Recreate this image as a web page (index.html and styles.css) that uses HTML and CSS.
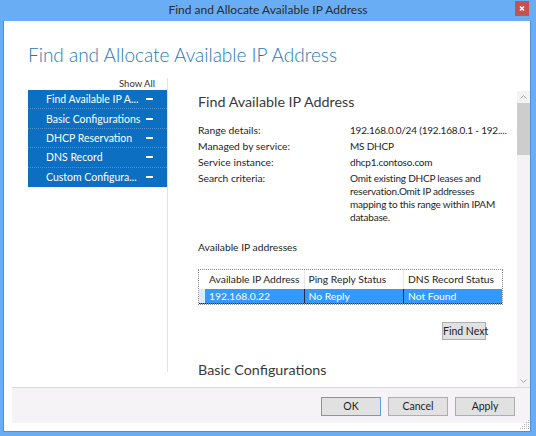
FILE: index.html
```html
<!DOCTYPE html>
<html>
<head>
<meta charset="utf-8">
<link rel="stylesheet" href="styles.css">
</head>
<body>
<div class="window">
  <div class="titlebar">
    <div></div>
    <div class="title">Find and Allocate Available IP Address</div>
    <div class="close"><svg width="14" height="15" viewBox="0 0 14 15"><path d="M5 5.5 L9 9.5 M9 5.5 L5 9.5" stroke="#fff" stroke-width="1.6"/></svg></div>
  </div>
  <div class="client">
    <div class="header"><h1>Find and Allocate Available IP Address</h1></div>
    <div class="main">
      <div class="navcol">
        <div class="showall">Show All</div>
        <ul class="nav">
          <li class="nav-item"><span class="nav-label">Find Available IP A...</span><span class="nav-minus"></span></li>
          <li class="nav-item"><span class="nav-label">Basic Configurations</span><span class="nav-minus"></span></li>
          <li class="nav-item"><span class="nav-label">DHCP Reservation</span><span class="nav-minus"></span></li>
          <li class="nav-item"><span class="nav-label">DNS Record</span><span class="nav-minus"></span></li>
          <li class="nav-item"><span class="nav-label">Custom Configura...</span><span class="nav-minus"></span></li>
        </ul>
      </div>
      <div class="contentcol">
        <div class="scroll">
          <h2>Find Available IP Address</h2>
          <div class="details">
            <div class="lbl">Range details:</div><div class="val">192.168.0.0/24 (192.168.0.1 - 192....</div>
            <div class="lbl">Managed by service:</div><div class="val">MS DHCP</div>
            <div class="lbl">Service instance:</div><div class="val">dhcp1.contoso.com</div>
            <div class="lbl">Search criteria:</div><div class="val">Omit existing DHCP leases and<br>reservation.Omit IP addresses<br>mapping to this range within IPAM<br>database.</div>
          </div>
          <div class="avail">Available IP addresses</div>
          <div class="table">
            <div class="row head">
              <div class="cell pad"></div>
              <div class="cell">Available IP Address</div>
              <div class="cell">Ping Reply Status</div>
              <div class="cell last">DNS Record Status</div>
            </div>
            <div class="row sel">
              <div class="cell pad"></div>
              <div class="cell">192.168.0.22</div>
              <div class="cell">No Reply</div>
              <div class="cell last">Not Found</div>
            </div>
          </div>
          <div class="findrow"><button class="btn small">Find Next</button></div>
          <h2 class="second">Basic Configurations</h2>
        </div>
        <div class="scrollbar">
          <svg class="arrow" width="13" height="12" viewBox="0 0 13 12"><path d="M3.5 7.5 L6.5 4.5 L9.5 7.5" fill="none" stroke="#a6a6a6" stroke-width="1"/></svg>
          <div class="thumb"></div>
          <div class="track"></div>
          <svg class="arrow" width="13" height="12" viewBox="0 0 13 12"><path d="M3.5 4.5 L6.5 7.5 L9.5 4.5" fill="none" stroke="#a6a6a6" stroke-width="1"/></svg>
        </div>
      </div>
    </div>
    <div class="footer">
      <button class="btn def">OK</button>
      <button class="btn">Cancel</button>
      <button class="btn">Apply</button>
    </div>
    <div class="bottom"></div>
    <svg class="grip" width="10" height="10" viewBox="0 0 10 10">
      <g fill="#b8b8b8">
        <rect x="8" y="0" width="1" height="1"/>
        <rect x="6" y="2" width="1" height="1"/><rect x="8" y="2" width="1" height="1"/>
        <rect x="4" y="4" width="1" height="1"/><rect x="6" y="4" width="1" height="1"/><rect x="8" y="4" width="1" height="1"/>
        <rect x="2" y="6" width="1" height="1"/><rect x="4" y="6" width="1" height="1"/><rect x="6" y="6" width="1" height="1"/><rect x="8" y="6" width="1" height="1"/>
        <rect x="0" y="8" width="1" height="1"/><rect x="2" y="8" width="1" height="1"/><rect x="4" y="8" width="1" height="1"/><rect x="6" y="8" width="1" height="1"/><rect x="8" y="8" width="1" height="1"/>
      </g>
    </svg>
  </div>
</div>
</body>
</html>
```
FILE: styles.css
```css
* { box-sizing: border-box; }
html, body {
  margin: 0;
  padding: 0;
  width: 536px;
  height: 436px;
  overflow: hidden;
  background: #69adf5;
  font-family: "Lato", "Open Sans", sans-serif;
  color: #1e1e1e;
}
.window {
  width: 536px;
  height: 436px;
  display: flex;
  flex-direction: column;
}
.titlebar {
  height: 21px;
  display: grid;
  grid-template-columns: 1fr auto 1fr;
  align-items: start;
}
.title {
  font-size: 12px;
  line-height: 19px;
  color: #2b2b2b;
}
.close {
  justify-self: end;
  margin: 1px 7px 0 0;
  width: 14px;
  height: 15px;
  background: #c75050;
  display: flex;
}
.client {
  position: relative;
  margin: 0 5px 0 3px;
  height: 411px;
  background: #fff;
  border: 1px solid #4f90de;
  border-top: none;
  display: flex;
  flex-direction: column;
}
.header {
  height: 57px;
  padding: 21px 0 0 24px;
}
h1 {
  margin: 0;
  font-weight: 300;
  font-size: 19px;
  line-height: 26px;
  color: #1f79b8;
  white-space: nowrap;
}
.main {
  height: 309px;
  display: flex;
}
.navcol {
  flex: none;
  width: 164px;
  height: 294px;
  padding-left: 24px;
  border-right: 1px solid #e2e2e2;
}
.showall {
  height: 12px;
  font-size: 9.5px;
  line-height: 12px;
  text-align: right;
  padding-right: 12px;
  color: #333;
}
.nav {
  list-style: none;
  margin: 0;
  padding: 0;
  background: #0c6fc2;
}
.nav-item {
  height: 19.4px;
  display: flex;
  align-items: center;
  padding: 0 14px 0 18px;
  border-bottom: 1px dotted #4a92d2;
  color: #fff;
  font-size: 10.5px;
}
.nav-item:last-child { border-bottom: none; }
.nav-label {
  flex: 1;
  white-space: nowrap;
  overflow: hidden;
}
.nav-minus {
  width: 7px;
  height: 2px;
  background: #fff;
  margin-left: 3px;
}
.contentcol {
  flex: 1;
  min-width: 0;
  display: flex;
  margin-top: 13px;
}
.scroll {
  flex: 1;
  min-width: 0;
  overflow: hidden;
  padding: 1px 12px 0 30px;
}
h2 {
  margin: 0;
  font-weight: 400;
  font-size: 14.3px;
  line-height: 20px;
  color: #3a3a3a;
  white-space: nowrap;
}
.details {
  margin-top: 12px;
  display: grid;
  grid-template-columns: 152px 1fr;
  row-gap: 3px;
  font-size: 10.3px;
  line-height: 13px;
}
.val {
  white-space: nowrap;
  font-size: 10px;
  letter-spacing: -0.2px;
}
.avail {
  margin-top: 17px;
  font-size: 10.3px;
  line-height: 13px;
}
.table {
  margin-top: 15px;
  width: 305px;
  border: 1px dotted #8c8c8c;
  font-size: 10.3px;
}
.row { display: flex; }
.row.head { height: 19px; }
.row.sel { height: 15px; background: #3399ff; color: #fff; border-bottom: 1px dotted #1a2340; }
.cell {
  width: 99.5px;
  padding-left: 4px;
  line-height: 19px;
  border-right: 1px solid #e6e6e6;
  white-space: nowrap;
  overflow: hidden;
}
.cell.pad { width: 6px; padding: 0; border-right: none; }
.cell.last { border-right: none; flex: 1; }
.row.sel .cell { line-height: 15px; border-right-color: #1e2c48; }
.row.sel .cell.pad { background: #d9ecff; }
.row.sel .cell.last { border-right: none; }
.findrow {
  display: flex;
  justify-content: flex-end;
  width: 288px;
  margin-top: 17px;
}
.btn {
  font-family: inherit;
  font-size: 10.5px;
  color: #1e1e1e;
  background: #e1e1e1;
  border: 1px solid #adadad;
  border-radius: 0;
  padding: 0;
  width: 60px;
  height: 19px;
  line-height: 17px;
  white-space: nowrap;
}
.btn.small { width: 44px; height: 18px; line-height: 16px; }
.btn.def { border-color: #5aa0de; }
h2.second { margin-top: 20px; }
.scrollbar {
  flex: none;
  width: 13px;
  background: #f5f2f5;
  display: flex;
  flex-direction: column;
  align-items: center;
}
.arrow { display: block; flex: none; }
.thumb {
  width: 13px;
  height: 52px;
  background: #cdcdcd;
}
.track { flex: 1; }
.footer {
  height: 36px;
  margin-left: 8px;
  background: #f5f3f6;
  border-top: 1px solid #d9d9d9;
  display: flex;
  justify-content: flex-end;
  align-items: flex-start;
  gap: 7px;
  padding: 9px 15px 0 0;
}
.bottom { flex: 1; }
.grip {
  position: absolute;
  right: 0;
  bottom: 1px;
}
```
